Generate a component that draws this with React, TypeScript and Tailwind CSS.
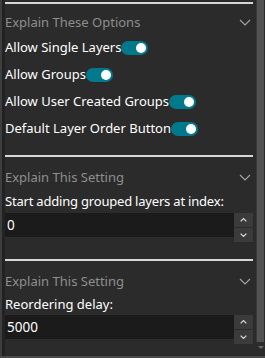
import React from "react";

const font = { fontFamily: '"Noto Sans", "Open Sans", sans-serif' };

const Chevron = ({
  up = false,
  className = "",
  width = 1.2,
}: {
  up?: boolean;
  className?: string;
  width?: number;
}) => (
  <svg viewBox="0 0 12 7" className={className} fill="none" stroke="currentColor" strokeWidth={width}>
    {up ? <path d="M1 6 L6 1 L11 6" /> : <path d="M1 1 L6 6 L11 1" />}
  </svg>
);

const Toggle = () => (
  <span className="flex h-[14px] w-[27px] shrink-0 items-center justify-end rounded-full bg-[#00798c] pr-[2px]">
    <span className="h-[10px] w-[10px] rounded-full bg-white" />
  </span>
);

const Header = ({ title }: { title: string }) => (
  <div className="flex h-[20px] items-center justify-between pr-[2px] text-[13px] leading-[20px] text-[#8e8e8e]">
    <span>{title}</span>
    <Chevron className="h-[7px] w-[12px] text-[#a3a3a3]" />
  </div>
);

const ToggleRow = ({ label }: { label: string }) => (
  <div className="flex h-[27px] items-center text-[13px] text-white">
    <span>{label}</span>
    <Toggle />
  </div>
);

const NumberInput = ({ value }: { value: string }) => (
  <div className="flex h-[29px] items-start">
    <div className="flex h-[24px] flex-1 items-center bg-[#1b1b1b] pl-[2px] text-[13.5px] text-white">
      {value}
    </div>
    <div className="flex w-[19px] flex-col gap-[1px]">
      <button className="flex h-[14px] items-center justify-center bg-[#3b3b3b] text-[#d6d6d6]">
        <Chevron up width={2.2} className="h-[4px] w-[7px]" />
      </button>
      <button className="flex h-[14px] items-center justify-center bg-[#3b3b3b] text-[#d6d6d6]">
        <Chevron width={2.2} className="h-[4px] w-[7px]" />
      </button>
    </div>
  </div>
);

const Divider = () => <div className="h-[2px] bg-[#d6d6d6]" />;

export default function App() {
  return (
    <div className="flex h-[358px] w-[265px] flex-col overflow-hidden bg-[#2b2b2b]" style={font}>
      <div className="flex flex-1 min-h-0">
        <div className="w-[2px] bg-[#3e3e3e]" />
        <div className="w-[3px] bg-[#222222]" />
        <div className="flex flex-1 flex-col pr-[3px] pt-[2px]">
          <Divider />
          <div className="pt-[8px]">
            <Header title="Explain These Options" />
          </div>
          <div className="mt-[2px]">
            <ToggleRow label="Allow Single Layers" />
            <ToggleRow label="Allow Groups" />
            <ToggleRow label="Allow User Created Groups" />
            <ToggleRow label="Default Layer Order Button" />
          </div>
          <div className="mt-[13px]">
            <Divider />
          </div>
          <div className="pt-[10px]">
            <Header title="Explain This Setting" />
          </div>
          <div className="mt-[4px] text-[13px] leading-[20px] tracking-[-0.2px] text-white">
            Start adding grouped layers at index:
          </div>
          <div className="mt-[2px]">
            <NumberInput value="0" />
          </div>
          <div className="mt-[17px]">
            <Divider />
          </div>
          <div className="pt-[10px]">
            <Header title="Explain This Setting" />
          </div>
          <div className="mt-[3px] text-[13px] leading-[20px] text-white">Reordering delay:</div>
          <div className="mt-[1px]">
            <NumberInput value="5000" />
          </div>
        </div>
        <div className="flex w-[9px] flex-col bg-[#2b2b2b]">
          <div className="flex flex-1 pb-[2px]">
            <div className="w-[1px] bg-[#3a3a3a]" />
            <div className="w-[7px] bg-[#525252]" />
          </div>
          <div className="flex h-[12px] items-start justify-center pt-[2px]">
            <span className="h-0 w-0 border-x-[3px] border-t-[3px] border-x-transparent border-t-[#6a6a6a]" />
          </div>
        </div>
      </div>
      <div className="h-[2px] bg-[#4a4a4a]" />
    </div>
  );
}
